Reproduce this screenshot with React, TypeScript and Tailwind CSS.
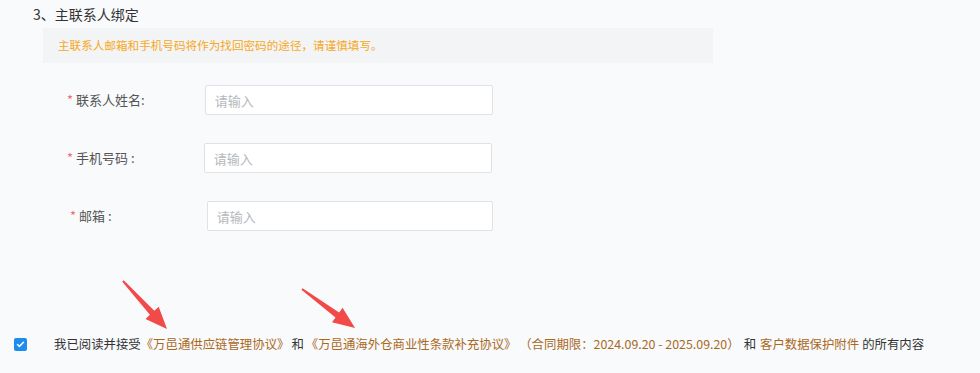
import { Check } from "lucide-react";

const font = { fontFamily: '"Noto Sans CJK SC", "Noto Sans", sans-serif' };

type Field = { label: string; colon: string; rowClass: string; inputClass: string };

const fields: Field[] = [
    { label: "联系人姓名", colon: ":", rowClass: "mt-[22px] pl-[67px]", inputClass: "ml-[60px] w-[288px]" },
    { label: "手机号码", colon: " :", rowClass: "mt-[28px] pl-[67px]", inputClass: "ml-[69px] w-[288px]" },
    { label: "邮箱", colon: " :", rowClass: "mt-[28px] pl-[70px]", inputClass: "ml-[95px] w-[286px]" },
];

function Arrows() {
    return (
        <svg className="absolute inset-0 pointer-events-none" width="980" height="373">
            <polygon
                fill="#f24a48"
                points="122.3,281.7 149.9,314.8 145.5,318.9 167,329 158.7,306.7 154.3,310.8 123.7,280.3"
            />
            <polygon
                fill="#f24a48"
                points="301.4,289.8 335.5,317.4 332,322.2 355,328 342.6,307.8 339.1,312.6 302.6,288.2"
            />
        </svg>
    );
}

export default function App() {
    return (
        <div className="relative w-[980px] h-[373px] bg-[#f9fafc] overflow-hidden" style={font}>
            {/* Section title */}
            <div className="pt-[4px] pl-[33px] text-[14px] leading-[20px] text-[#333]">3、主联系人绑定</div>

            {/* Notice */}
            <div className="mt-[4px] ml-[43px] w-[670px] h-[35px] bg-[#f3f4f6] flex items-center pl-[15px] text-[11.6px] text-[#f7a823]">
                主联系人邮箱和手机号码将作为找回密码的途径，请谨慎填写。
            </div>

            {/* Form */}
            {fields.map((f) => (
                <div key={f.label} className={`flex items-center ${f.rowClass}`}>
                    <div className="flex items-center text-[13px] text-[#555] whitespace-pre">
                        <span className="text-[#f56c6c] mr-[3px]">*</span>
                        <span>{f.label}{f.colon}</span>
                    </div>
                    <input
                        className={`${f.inputClass} h-[30px] bg-white border border-[#e0e2e6] rounded-[2px] px-[9px] text-[13px] text-[#333] placeholder:text-[#b5b8bd] outline-none`}
                        placeholder="请输入"
                    />
                </div>
            ))}

            {/* Agreement */}
            <div className="absolute left-0 top-[334px] flex items-center h-[20px] text-[12.4px] text-[#333] whitespace-pre">
                <div className="ml-[14px] w-[13px] h-[13px] rounded-[2px] bg-[#1c8cf0] flex items-center justify-center">
                    <Check className="w-[9px] h-[9px] text-white" strokeWidth={4} />
                </div>
                <span className="ml-[27px]">我已阅读并接受</span>
                <span className="text-[#a9691c]">《万邑通供应链管理协议》</span>
                <span className="px-[2px]">和</span>
                <span className="text-[#a9691c]">《万邑通海外仓商业性条款补充协议》 （合同期限：2024.09.20 - 2025.09.20）</span>
                <span className="pl-[4px] pr-[4px]">和</span>
                <span className="text-[#a9691c]">客户数据保护附件</span>
                <span className="pl-[3px]">的所有内容</span>
            </div>

            <Arrows />
        </div>
    );
}
